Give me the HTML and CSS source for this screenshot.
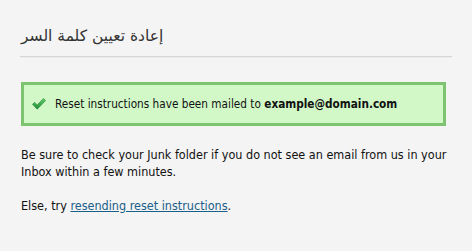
FILE: index.html
```html
<!DOCTYPE html>
<html lang="en">
<head>
<meta charset="utf-8">
<link rel="stylesheet" href="styles.css">
</head>
<body>
<div class="page">
  <h1 class="title" dir="rtl">إعادة تعيين كلمة السر</h1>
  <div class="rule"></div>
  <div class="notice">
    <svg class="check" width="14" height="12" viewBox="0 0 14 12">
      <defs>
        <linearGradient id="g" x1="0" y1="0" x2="0" y2="1">
          <stop offset="0" stop-color="#5fd36a"/>
          <stop offset="1" stop-color="#1f8a33"/>
        </linearGradient>
      </defs>
      <path d="M0.5 6.2 L2.6 4.4 L5.2 6.9 L11.4 0.6 L13.5 2.6 L5.2 11.2 Z" fill="url(#g)" stroke="#1d7a2e" stroke-width="0.6" stroke-linejoin="round"/>
    </svg>
    <span class="notice-text">Reset instructions have been mailed to <b>example@domain.com</b></span>
  </div>
  <p class="para">Be sure to check your Junk folder if you do not see an email from us in your Inbox within a few minutes.</p>
  <p class="para">Else, try <a href="#" class="link">resending reset instructions</a>.</p>
</div>
</body>
</html>
```
FILE: styles.css
```css
html, body {
  margin: 0;
  padding: 0;
  background: #f4f4f4;
}
body {
  font-family: "DejaVu Sans Condensed", "DejaVu Sans", sans-serif;
  font-size: 12px;
  color: #111;
}
.page {
  padding: 0 20px;
}
.title {
  margin: 0;
  padding-top: 24px;
  padding-left: 1px;
  height: 32px;
  font-family: "DejaVu Sans", "Noto Sans", sans-serif;
  font-weight: normal;
  font-size: 15.5px;
  line-height: 24px;
  color: #333;
  text-align: left;
  display: block;
  width: max-content;
}
.rule {
  height: 1px;
  background: #d6d6d6;
  border-bottom: 1px solid #ececec;
}
.notice {
  margin: 24px 6px 0 1px;
  height: 38px;
  border: 3px solid #7cc46f;
  background: #d2f8c8;
  display: flex;
  align-items: center;
  padding-left: 8px;
}
.check {
  margin-right: 9px;
  flex: none;
}
.notice-text {
  color: #111;
  font-size: 11.7px;
}
.notice-text b {
  font-weight: bold;
}
.para {
  margin: 0;
  padding-left: 1px;
  font-size: 12.5px;
  line-height: 17px;
}
.para:first-of-type {
  margin-top: 20px;
}
.para + .para {
  margin-top: 17px;
}
.link {
  color: #1a5e8a;
  text-decoration: underline;
}
```
